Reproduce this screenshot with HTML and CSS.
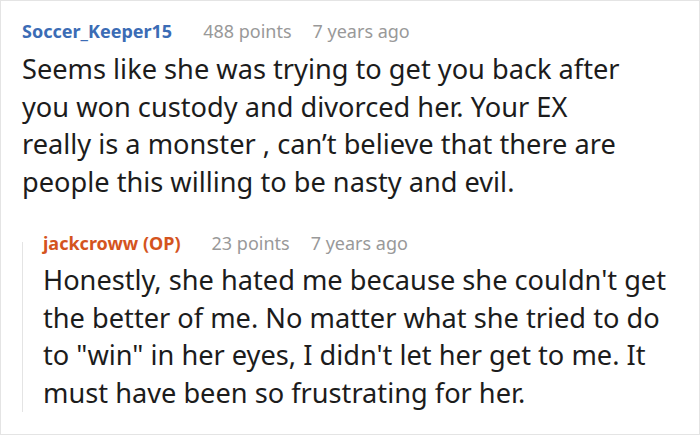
FILE: index.html
```html
<!DOCTYPE html>
<html>
<head>
<meta charset="utf-8">
<link rel="stylesheet" href="styles.css">
</head>
<body>
<div class="card">
  <div class="comment">
    <div class="meta">
      <span class="author">Soccer_Keeper15</span>
      <span class="info">488 points</span>
      <span class="info">7 years ago</span>
    </div>
    <p class="text">Seems like she was trying to get you back after you won custody and divorced her. Your EX really is a monster , can’t believe that there are people this willing to be nasty and evil.</p>
  </div>
  <div class="reply">
    <div class="meta">
      <span class="author op">jackcroww (OP)</span>
      <span class="info">23 points</span>
      <span class="info">7 years ago</span>
    </div>
    <p class="text">Honestly, she hated me because she couldn't get the better of me. No matter what she tried to do to "win" in her eyes, I didn't let her get to me. It must have been so frustrating for her.</p>
  </div>
</div>
</body>
</html>
```
FILE: styles.css
```css
html, body {
  margin: 0;
  padding: 0;
  background: #fff;
}
body {
  font-family: "Noto Sans", "Open Sans", sans-serif;
  width: 700px;
  height: 436px;
  overflow: hidden;
}
.card {
  box-sizing: border-box;
  width: 700px;
  height: 435px;
  border: 1px solid #e4e4e4;
  padding: 16px 20px 0 21px;
}
.meta {
  display: flex;
  align-items: baseline;
  gap: 21px;
  font-size: 18px;
  line-height: 28px;
}
.meta .author {
  font-weight: 700;
  color: #3b6cb5;
  margin-right: 10px;
}
.meta .author.op {
  color: #d4541e;
}
.meta .info {
  color: #999;
}
.text {
  margin: 5px 0 0;
  font-size: 27.2px;
  line-height: 37.7px;
  color: #1c1c1c;
}
.comment .text {
  max-width: 618px;
}
.reply {
  position: relative;
  margin-top: 28px;
  padding-left: 21px;
}
.reply::before {
  content: "";
  position: absolute;
  left: 0;
  top: 13px;
  bottom: 0;
  border-left: 1px solid #e4e4e4;
}
.reply .text {
  margin-top: 4px;
}
```
